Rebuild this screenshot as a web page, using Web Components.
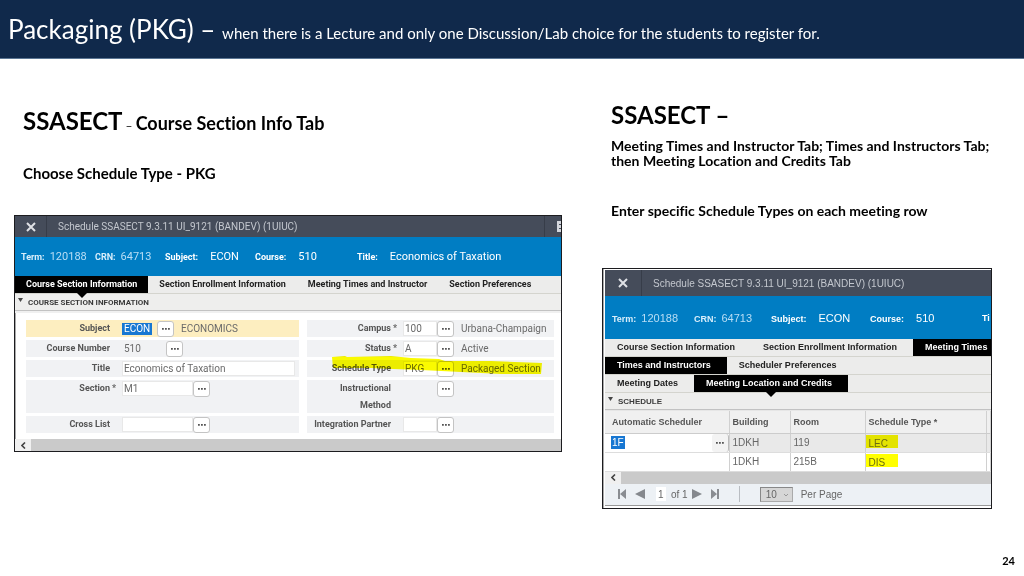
<!DOCTYPE html>
<html lang="en">
<head>
<meta charset="utf-8">
<title>Packaging (PKG)</title>
<style>
html, body { margin: 0; }
body { min-height: 100vh; display: flex; flex-direction: column; background: #fff; font-family: Lato, "Open Sans", sans-serif; font-variant-ligatures: none; color: #000; }
main { display: grid; grid-template-columns: minmax(0, 548fr) minmax(0, 390fr); gap: 40px; padding: 0 32px 0 14px; align-items: start; }
</style>
</head>
<body>
<slide-header lead="Packaging (PKG) –">when there is a Lecture and only one Discussion/Lab choice for the students to register for.</slide-header>
<main>
  <slide-column style="--top:46px;--after-head:21px;--before-window:32px">
    <span slot="head">SSASECT</span><span slot="dash">–</span><span slot="sub">Course Section Info Tab</span>
    <span slot="note">Choose Schedule Type - PKG</span>
    <app-window style="--ui:Roboto,'Liberation Sans',sans-serif;--bar:21px;--bar-cell:31px;--tab-pad:0 11px" heading="Schedule SSASECT 9.3.11 UI_9121 (BANDEV) (1UIUC)" tools>
      <info-bar style="--cols:74px 70px 90px 102px 1fr;--h:39px;--pad:6px" last-key="Title:" last-value="Economics of Taxation"></info-bar>
      <tab-strip tabs="Course Section Information|Section Enrollment Information|Meeting Times and Instructor|Section Preferences" active="0" pointer></tab-strip>
      <section-head>COURSE SECTION INFORMATION</section-head>
      <section-form></section-form>
      <scroll-strip></scroll-strip>
    </app-window>
  </slide-column>
  <slide-column style="--top:40px;--after-head:7px;--before-window:50px" small>
    <span slot="head">SSASECT –</span>
    <span slot="note">Meeting Times and Instructor Tab; Times and Instructors Tab;<br>then Meeting Location and Credits Tab</span>
    <span slot="more">Enter specific Schedule Types on each meeting row</span>
    <app-window style="--ui:'Liberation Sans',Arial,sans-serif;--bar:26px;--bar-cell:36px;--tab-pad:0 16px 0 12px" heading="Schedule SSASECT 9.3.11 UI_9121 (BANDEV) (1UIUC)" wide>
      <info-bar style="--cols:82px 77px 99px 112px 1fr;--h:43px;--pad:7px" last-key="Ti"></info-bar>
      <tab-strip tabs="Course Section Information|Section Enrollment Information|Meeting Times" active="2"></tab-strip>
      <tab-strip tabs="Times and Instructors|Scheduler Preferences" active="0"></tab-strip>
      <tab-strip tabs="Meeting Dates|Meeting Location and Credits" active="1" pointer></tab-strip>
      <section-head>SCHEDULE</section-head>
      <schedule-table></schedule-table>
      <scroll-strip></scroll-strip>
      <pager-bar></pager-bar>
    </app-window>
  </slide-column>
</main>
<slide-footer>24</slide-footer>

<script>
const define = (name, render) => customElements.define(name, class extends HTMLElement {
  constructor() { super(); this.attachShadow({ mode: 'open' }); }
  connectedCallback() { this.shadowRoot.innerHTML = render(this); }
});
const dots = '<svg width="8" height="2" viewBox="0 0 8 2"><path d="M0 0h1.8v1.8H0zM3 0h1.8v1.8H3zM6 0h1.8v1.8H6z" fill="#555"/></svg>';

define('slide-header', el => `
<style>
:host { display: block; background: #10294b; border-bottom: 1px solid #5b7694; color: #fff; height: 58px; box-sizing: content-box; }
h1 { margin: 0; padding: 10px 8px 0; font-size: 15px; font-weight: 400; line-height: 38px; white-space: nowrap; }
b { font-size: 26px; font-weight: 400; }
</style>
<h1><b>${el.getAttribute('lead')} </b><slot></slot></h1>`);

define('slide-column', el => `
<style>
:host { display: block; padding-top: var(--top); }
h2, p { margin: 0; padding-left: 9px; font-weight: 700; white-space: nowrap; }
h2 { font-size: 24px; line-height: 32px; margin-bottom: var(--after-head); }
.dash { font-size: 12px; font-weight: 400; }
.sub { font-size: 18px; }
p { font-size: 15px; line-height: 20px; }
:host([small]) p { font-size: 14px; line-height: 15px; }
:host([small]) .more { padding-top: 35px; }
.window { margin-top: var(--before-window); }
</style>
<h2><slot name="head"></slot>${el.hasAttribute('small') ? '' : '<span class="dash"> <slot name="dash"></slot> </span><span class="sub"><slot name="sub"></slot></span>'}</h2>
<p><slot name="note"></slot></p>
${el.hasAttribute('small') ? '<p class="more"><slot name="more"></slot></p>' : ''}
<div class="window"><slot></slot></div>`);

define('app-window', el => `
<style>
:host { display: block; border: 1px solid #1c1c1f; overflow: hidden; background: #fff; font-family: var(--ui); box-shadow: inset 1px 0 #aaa; }
:host([wide]) { padding: 1px 0 2px 2px; }
header { display: flex; align-items: center; height: var(--bar); background: #454c5a; color: #c3c7ce; font-size: 10px; }
button { all: unset; width: var(--bar-cell); height: 100%; display: grid; place-items: center; border-right: 1px solid #373d49; }
.title { flex: 1; padding-left: 11px; white-space: nowrap; }
.tools { width: 16px; height: 100%; border-left: 1px solid #373d49; display: flex; align-items: center; justify-content: flex-end; }
</style>
<header>
<button aria-label="Close"><svg width="10" height="10" viewBox="0 0 10 10"><path d="M1 1L9 9M9 1L1 9" stroke="#dfe1e5" stroke-width="2"/></svg></button>
<span class="title">${el.getAttribute('heading')}</span>
${el.hasAttribute('tools') ? '<span class="tools"><svg width="4" height="11" viewBox="0 0 4 11"><path d="M0 0h4v11H0z" fill="#d3d6dc"/><path d="M2 3h2v1H2zM2 7h2v1H2z" fill="#454c5a"/></svg></span>' : ''}
</header>
<slot></slot>`);

define('info-bar', el => `
<style>
:host { display: block; background: #007dc3; color: #fff; }
dl { margin: 0; height: var(--h); padding-left: var(--pad); display: grid; grid-template-columns: var(--cols); align-items: center; }
div { display: flex; align-items: baseline; gap: 5px; white-space: nowrap; }
.big { gap: 12px; }
dt { font-size: 9px; font-weight: 700; }
dd { margin: 0; font-size: 11px; }
.key { color: #b9def5; }
.key dt { color: #d8eefb; }
</style>
<dl>
<div class="key"><dt>Term:</dt><dd>120188</dd></div>
<div class="key"><dt>CRN:</dt><dd>64713</dd></div>
<div class="big"><dt>Subject:</dt><dd>ECON</dd></div>
<div class="big"><dt>Course:</dt><dd>510</dd></div>
<div class="big"><dt>${el.getAttribute('last-key')}</dt>${el.hasAttribute('last-value') ? `<dd>${el.getAttribute('last-value')}</dd>` : ''}</div>
</dl>`);

define('tab-strip', el => `
<style>
:host { display: block; background: #ececeb; border-bottom: 1px solid #d4d4ce; }
nav { display: flex; height: 17px; }
button { all: unset; position: relative; flex: none; padding: var(--tab-pad); font-size: 9px; font-weight: 700; line-height: 17px; color: #222; white-space: nowrap; }
.on { background: #000; color: #fff; }
.point::after { content: ""; position: absolute; z-index: 1; left: calc(50% - 5px); top: 100%; border: 5px solid transparent; border-top-color: #000; border-bottom: 0; }
</style>
<nav role="tablist">${el.getAttribute('tabs').split('|').map((t, i) => {
  const on = i === +el.getAttribute('active');
  return `<button role="tab" aria-selected="${on}" class="${on ? 'on' : ''} ${on && el.hasAttribute('pointer') ? 'point' : ''}">${t}</button>`;
}).join('')}</nav>`);

define('section-head', () => `
<style>
:host { display: block; background: #eeeeed; border-bottom: 1px solid #c2c2c2; }
h3 { margin: 0; display: flex; align-items: center; gap: 5px; padding-left: 3px; height: 16px; font-size: 8px; font-weight: 700; color: #3c3c3c; }
svg { margin-bottom: 5px; }
</style>
<h3><svg width="5" height="4" viewBox="0 0 5 4"><path d="M0 0h5L2.5 4z" fill="#444"/></svg><slot></slot></h3>`);

define('scroll-strip', () => `
<style>
:host { display: block; background: #cacaca; height: 12px; }
button { all: unset; display: grid; place-items: center; width: 16px; height: 12px; background: #f0f0f0; }
</style>
<button aria-label="Scroll left"><svg width="5" height="7" viewBox="0 0 5 7"><path d="M4 .5L1 3.5L4 6.5" fill="none" stroke="#444" stroke-width="1.6"/></svg></button>`);

define('field-row', el => {
  const a = n => el.getAttribute(n), w = a('width'), has = n => el.hasAttribute(n);
  return `
<style>
:host { display: grid; grid-template-columns: 84px 12px 1fr; background: #f1f2f4; height: 17px; font-size: 10px; line-height: 17px; color: #6a6a6a; }
:host([tall]) { height: 33px; }
:host([current]) { background: #fdeec0; }
label { font-size: 9px; font-weight: 700; color: #555; text-align: right; }
.star { font-size: 9px; font-weight: 700; padding-left: 2px; color: #666; }
.value { display: flex; height: 17px; align-items: center; min-width: 0; }
input { box-sizing: border-box; min-width: 0; height: 15px; margin: 0; padding: 0 0 0 1px; border: 1px solid #e8e8e8; background: #fff; font: inherit; line-height: 13px; color: inherit; }
:host([plain]) input { background: none; border-color: transparent; }
:host([current]) input { background: #1777d2; border: 0; height: 12px; color: #fff; padding-left: 2px; }
button { all: unset; box-sizing: border-box; width: 17px; height: 16px; border: 1px solid #c4c4c4; border-radius: 3px; background: #fff; display: grid; place-items: center; }
:host([current]) button { margin-left: 5px; }
.desc { padding-left: 7px; white-space: nowrap; }
</style>
<label for="v">${a('label')}</label><span class="star">${has('star') ? '*' : ''}</span>
<span class="value"><input id="v" value="${a('value') || ''}" style="width:${w}">
${has('lookup') ? `<button aria-label="Look up ${a('label')}">${dots}</button>` : ''}
${has('desc') ? `<span class="desc">${a('desc')}</span>` : ''}</span>`;
});

define('section-form', () => `
<style>
:host { display: block; border-top: 2px solid #f0f0f0; }
form { position: relative; display: grid; grid-template-columns: 273fr 247fr; gap: 8px; padding: 7px 7px 6px 11px; }
div { display: grid; gap: 3px; min-width: 0; }
svg { position: absolute; left: 316px; top: 43px; mix-blend-mode: multiply; pointer-events: none; }
</style>
<form>
<div>
<field-row label="Subject" value="ECON" width="30px" lookup desc="ECONOMICS" current></field-row>
<field-row label="Course Number" value="510" width="44px" lookup plain></field-row>
<field-row label="Title" value="Economics of Taxation" width="173px"></field-row>
<field-row label="Section" star value="M1" width="71px" lookup tall></field-row>
<field-row label="Cross List" width="71px" lookup></field-row>
</div>
<div>
<field-row label="Campus" star value="100" width="34px" lookup desc="Urbana-Champaign"></field-row>
<field-row label="Status" star value="A" width="34px" lookup desc="Active"></field-row>
<field-row label="Schedule Type" value="PKG" width="34px" lookup desc="Packaged Section"></field-row>
<field-row label="Instructional Method" width="34px" lookup tall plain></field-row>
<field-row label="Integration Partner" width="34px" lookup></field-row>
</div>
<svg width="212" height="20" viewBox="0 0 212 20"><path d="M1 1L14 0L16 1L60 0L80 2L108 3L114 5L160 5L211 7L210 18L170 18L130 16L90 14L62 13L40 12L2 12Z" fill="#fafa00"/></svg>
</form>`);

define('schedule-table', () => `
<style>
:host { display: block; border-top: 1px solid #e6e6e6; }
table { width: 100%; table-layout: fixed; border-collapse: collapse; font-size: 10px; color: #666; }
th, td { box-sizing: border-box; padding: 0 0 0 3px; text-align: left; white-space: nowrap; overflow: hidden; border-right: 1px solid #d0d0d0; }
th { height: 22px; font-size: 9px; color: #555; background: #f0f0f0; border-bottom: 1px solid #ccc; }
th:first-child { padding-left: 7px; }
td { height: 19px; border-bottom: 1px solid #ddd; }
td:first-child { padding-left: 5px; background: #fff; }
tr.on td:not(:first-child) { background: #e9e9e9; }
.edit { display: flex; align-items: center; background: #fff; }
input { box-sizing: border-box; width: 14px; height: 13px; padding: 0 0 0 1px; margin: 0 auto 0 1px; border: 0; background: #1777d2; color: #fff; font: inherit; }
button { all: unset; box-sizing: border-box; width: 17px; height: 18px; display: grid; place-items: center; background: #f3f3f3; border-right: 1px solid #bbb; border-radius: 3px; }
td.mark { padding: 0; }
mark { display: block; width: 32px; height: 13px; margin-bottom: 3px; padding-left: 3px; box-sizing: border-box; line-height: 17px; background: #ff0; color: #6c6c10; }
.on mark { background: #e3e300; }
.a { width: 124px; } .b { width: 61px; } .c { width: 75px; } .d { width: 121px; }
</style>
<table>
<thead><tr><th class="a">Automatic Scheduler</th><th class="b">Building</th><th class="c">Room</th><th class="d">Schedule Type *</th><th>H</th></tr></thead>
<tbody>
<tr class="on"><td><div class="edit"><input aria-label="Automatic Scheduler" value="1F"><button aria-label="Look up">${dots}</button></div></td><td>1DKH</td><td>119</td><td class="mark"><mark>LEC</mark></td><td></td></tr>
<tr><td></td><td>1DKH</td><td>215B</td><td class="mark"><mark>DIS</mark></td><td></td></tr>
</tbody>
</table>`);

define('pager-bar', () => `
<style>
:host { display: block; background: #edf1f5; border-bottom: 1px solid #999; color: #666; font-size: 10px; }
div { display: flex; align-items: center; height: 21px; padding-left: 13px; }
button { all: unset; display: grid; width: 10px; }
.prev { margin: 0 11px 0 7px; }
input { box-sizing: border-box; width: 10px; height: 14px; margin: 0; padding: 0 0 0 2px; border: 0; background: #fff; color: inherit; font: inherit; }
.of { padding: 0 4px 0 5px; }
.last { margin-left: 9px; }
hr { width: 1px; height: 16px; margin: 0 20px 0 18px; border: 0; background: #b9bdc2; }
.pick { position: relative; display: flex; }
select { appearance: none; box-sizing: border-box; width: 33px; height: 15px; margin: 0; padding: 0 0 0 5px; border: 1px solid #aaa; border-top-color: #888; border-left-color: #888; border-radius: 0; background: #d6d6d6; color: inherit; font: inherit; }
.pick svg { position: absolute; right: 4px; top: 6px; }
label { padding-left: 8px; }
</style>
<div>
<button aria-label="First"><svg width="8" height="10" viewBox="0 0 8 10"><path d="M0 0h2v10H0zM8 0v10L2 5z" fill="#8a8d92"/></svg></button>
<button class="prev" aria-label="Previous"><svg width="10" height="10" viewBox="0 0 10 10"><path d="M10 0v10L0 5z" fill="#85888d"/></svg></button>
<input aria-label="Page" value="1"><span class="of">of 1</span>
<button aria-label="Next"><svg width="10" height="10" viewBox="0 0 10 10"><path d="M0 0v10L10 5z" fill="#85888d"/></svg></button>
<button class="last" aria-label="Last"><svg width="8" height="10" viewBox="0 0 8 10"><path d="M6 0h2v10H6zM0 0v10L6 5z" fill="#8a8d92"/></svg></button>
<hr>
<span class="pick"><select id="n"><option>10</option></select><svg width="6" height="4" viewBox="0 0 6 4"><path d="M1 1L3 3L5 1" fill="none" stroke="#999"/></svg></span>
<label for="n">Per Page</label>
</div>`);

define('slide-footer', () => `
<style>
:host { display: block; margin-top: auto; padding: 0 9px 7px 0; text-align: right; font-size: 11px; font-weight: 700; line-height: 16px; }
</style><slot></slot>`);
</script>
</body>
</html>
